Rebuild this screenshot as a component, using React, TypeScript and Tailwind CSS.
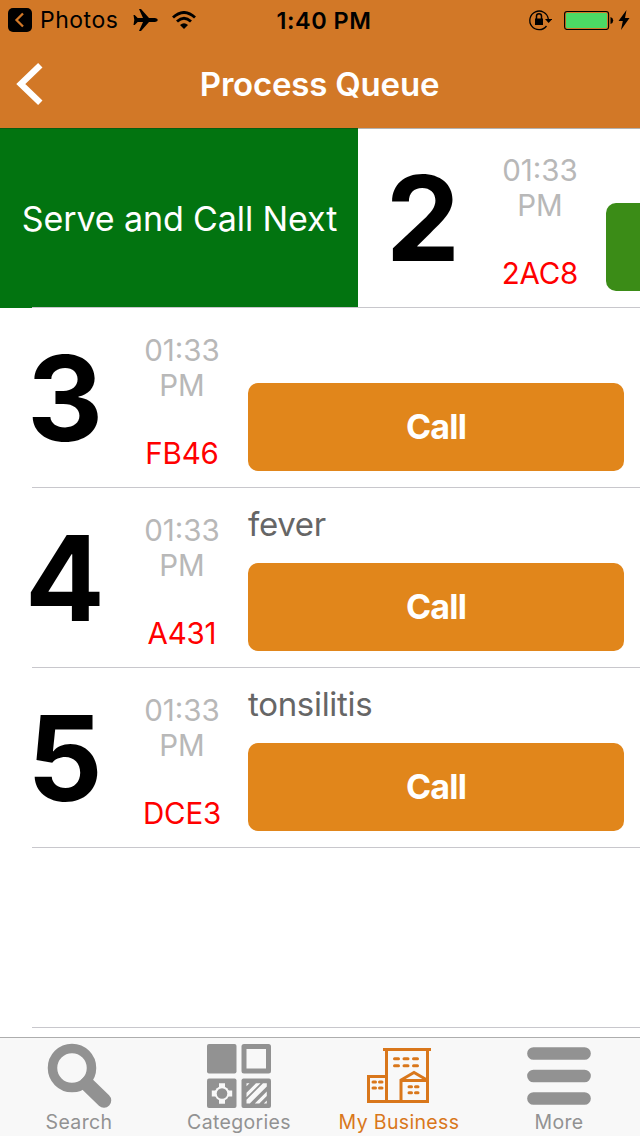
import type { ReactNode } from "react";

type Entry = { num: string; code: string; note: string };

const entries: Entry[] = [
  { num: "3", code: "FB46", note: "" },
  { num: "4", code: "A431", note: "fever" },
  { num: "5", code: "DCE3", note: "tonsilitis" },
];

function Ticket({ num, code }: { num: string; code: string }) {
  return (
    <>
      <div className="flex h-[179px] w-[130px] shrink-0 items-center justify-center text-[118px] leading-none font-bold text-black">
        {num}
      </div>
      <div className="flex w-[104px] shrink-0 flex-col items-center pt-[25px] text-[29.5px] leading-[35px]">
        <span className="text-[#b8b8b8]">01:33</span>
        <span className="text-[#b8b8b8]">PM</span>
        <span className="mt-[33px] tracking-[-0.2px] text-[#ff0000]">{code}</span>
      </div>
    </>
  );
}

function Row({ entry }: { entry: Entry }) {
  return (
    <div className="h-[180px]">
      <div className="flex h-[179px]">
        <Ticket num={entry.num} code={entry.code} />
        <div className="flex flex-1 flex-col pr-4 pl-[14px]">
          <div className="h-[75px] pt-4 text-[33px] leading-[40px] tracking-[-0.3px] text-[#666666]">{entry.note}</div>
          <button className="h-[88px] rounded-[10px] bg-[#e1861b] pb-px text-[34px] font-bold tracking-[-0.8px] text-white">
            Call
          </button>
        </div>
      </div>
      <div className="ml-8 h-px bg-[#c8c7cc]" />
    </div>
  );
}

function StatusBar() {
  return (
    <div className="flex h-10 items-center text-black">
      <div className="flex w-[220px] items-center pl-2">
        <svg className="size-6" viewBox="0 0 24 24">
          <rect width="24" height="24" rx="5" />
          <path d="M15 5.500 8.500 12l6.500 6.500" fill="none" stroke="#d27827" strokeWidth="2.300" />
        </svg>
        <span className="ml-2 w-[78px] text-[23px] leading-10 tracking-[0.5px] whitespace-nowrap">Photos</span>
        <svg className="ml-[15px] h-6 w-[25px]" viewBox="0 0 25 24">
          <path d="M.5 7h1.200l3 3H10L6 1h2l8 9h6q2.800.3 2.800 2t-2.800 2h-6l-8 9H6l4-9H4.700l-3 3H.5l.8-5z" />
        </svg>
        <svg className="ml-[14px] h-[18px] w-6" viewBox="0 0 24 18">
          <path d="M1 6.500Q12-3.500 23 6.500M5 10.500Q12 4.200 19 10.500" fill="none" stroke="currentColor" strokeWidth="2.900" />
          <path d="M8 14Q12 10.300 16 14L12 18z" />
        </svg>
      </div>
      <div className="w-[208px] pt-0.5 text-center text-[23.500px] font-semibold tracking-[0.5px]">1:40 PM</div>
      <div className="flex flex-1 items-center pl-[100px]">
        <svg className="h-6 w-6" viewBox="0 0 24 24">
          <path d="M18.500 18A9.300 9.300 0 1 1 20.300 11" fill="none" stroke="currentColor" strokeWidth="1.300" />
          <path d="M17 11h7.200L20.600 15z" />
          <path d="M7 10.500h8V17H7z" />
          <path d="M8.500 11V8q0-2.300 2.500-2.300T13.500 8v3" fill="none" stroke="currentColor" strokeWidth="1.500" />
        </svg>
        <svg className="ml-3 h-5 w-[50px]" viewBox="0 0 50 20">
          <rect x=".6" y="1.500" width="44" height="18" rx="2.500" fill="none" stroke="currentColor" strokeWidth="1.100" />
          <rect x="2" y="3" width="41" height="15" rx="1" fill="#4cd964" />
          <path d="M46.500 7q2.700.8 2.700 3.500t-2.700 3.500z" />
        </svg>
        <svg className="ml-1 h-5 w-3" viewBox="0 0 12 20">
          <path d="M8.500 0 .5 11h4.300L3 20 11.500 8H7z" />
        </svg>
      </div>
    </div>
  );
}

function Tab({ label, active, children }: { label: string; active?: boolean; children: ReactNode }) {
  return (
    <div className={`flex w-40 flex-col items-center pt-[5px] pr-0.5 ${active ? "text-[#d9771b]" : "text-[#929292]"}`}>
      <svg className="h-[66px] w-[66px]" viewBox="0 0 66 66" fill="none" stroke="currentColor">
        {children}
      </svg>
      <span className="mt-px text-[19.500px] leading-6 tracking-[0.35px] whitespace-nowrap">{label}</span>
    </div>
  );
}

export default function App() {
  return (
    <div className="flex h-[1136px] w-[640px] flex-col overflow-hidden bg-white font-['Inter',sans-serif]">
      <header className="h-32 bg-[#d27827]">
        <StatusBar />
        <div className="flex h-[88px] items-center">
          <svg className="ml-4 h-[44px] w-7" viewBox="0 0 28 44">
            <path d="M24.300 3.200 4.800 22l19.500 18.800" fill="none" stroke="white" strokeWidth="6.300" />
          </svg>
          <h1 className="flex-1 pt-0.5 pr-[45px] text-center text-[33px] font-semibold tracking-[-0.2px] text-white">Process Queue</h1>
        </div>
      </header>

      <main className="h-[909px] overflow-hidden">
        <div className="flex h-[180px]">
          <div className="flex h-[180px] w-[358px] shrink-0 flex-col border-t border-[#075d12] bg-[#027410] text-[34px] whitespace-nowrap text-white">
            <div className="flex h-[178px] items-center justify-center pl-px tracking-[-0.1px]">Serve and Call Next</div>
            <div className="ml-8 h-px bg-[#c8c7cc]" />
          </div>
          <div className="flex h-[180px] flex-1 overflow-hidden border-b border-[#c8c7cc] shadow-[inset_0_1px_0_#b2b2b2]">
            <Ticket num="2" code="2AC8" />
            <div className="mt-[75px] ml-[14px] h-[88px] w-[376px] shrink-0 rounded-[10px] bg-[#3b8c17]" />
          </div>
        </div>
        {entries.map((e) => (
          <Row key={e.num} entry={e} />
        ))}
        <div className="ml-8 h-[180px] border-b border-[#c8c7cc]" />
      </main>

      <nav className="flex h-[99px] border-t border-[#adadad] bg-[#f8f8f8]">
        <Tab label="Search">
          <circle cx="26" cy="25" r="19.500" strokeWidth="9.500" />
          <path d="m41 41 17 16.500" strokeWidth="14.500" strokeLinecap="round" />
        </Tab>
        <Tab label="Categories">
          <rect x="1" y="1" width="29.500" height="29.500" rx="2" fill="currentColor" stroke="none" />
          <rect x="38" y="3.500" width="24.500" height="24.500" strokeWidth="5" strokeLinejoin="round" />
          <rect x="1" y="35.500" width="29.500" height="29.500" rx="2" fill="currentColor" stroke="none" />
          <rect x="35.500" y="35.500" width="29.500" height="29.500" rx="2" fill="currentColor" stroke="none" />
          <path d="M13 40.300h6v5h-6zM13 55.700h6v5h-6zM5.800 47.500h5v6h-5zM21.200 47.500h5v6h-5z" fill="#f8f8f8" stroke="none" />
          <circle cx="16" cy="50.500" r="7.300" fill="#f8f8f8" stroke="none" />
          <circle cx="16" cy="50.500" r="5.300" fill="currentColor" stroke="none" />
          <path d="M40.500 40.300h3l-3 3zM50 40.300h4.500l-14 14v-4.500zM57 40.300h3.800v3.200L43.800 60.500h-3.300v-3.700zM60.800 48.500v4.500l-7.500 7.500h-4.500zM60.800 57.500v3h-3z" fill="#f8f8f8" stroke="none" />
        </Tab>
        <Tab label="My Business" active>
          <path d="M17 6.500h48M20.500 6.500v51M61.500 6.500v51M2.500 33.500h18M2.500 32v26.500H63" strokeWidth="3" />
          <path d="M35 58V37L48 29.500 61 37M35 37.500h26" strokeWidth="3" />
          <path d="M28.500 15.700h4M38 15.700h4M47.500 15.700h4M28.500 22.700h4M38 22.700h4M47.500 22.700h4M7 39h2.500M13.500 39H16M7 45h2.500M13.500 45H16M43 43.700h2.500M49.500 43.700h2.500M43 49.700h2.500M49.500 49.700h2.500" strokeWidth="3" strokeLinecap="round" />
        </Tab>
        <Tab label="More">
          <path d="M7.500 10.500h51M7.500 33h51M7.500 55.500h51" strokeWidth="12.700" strokeLinecap="round" />
        </Tab>
      </nav>
    </div>
  );
}
